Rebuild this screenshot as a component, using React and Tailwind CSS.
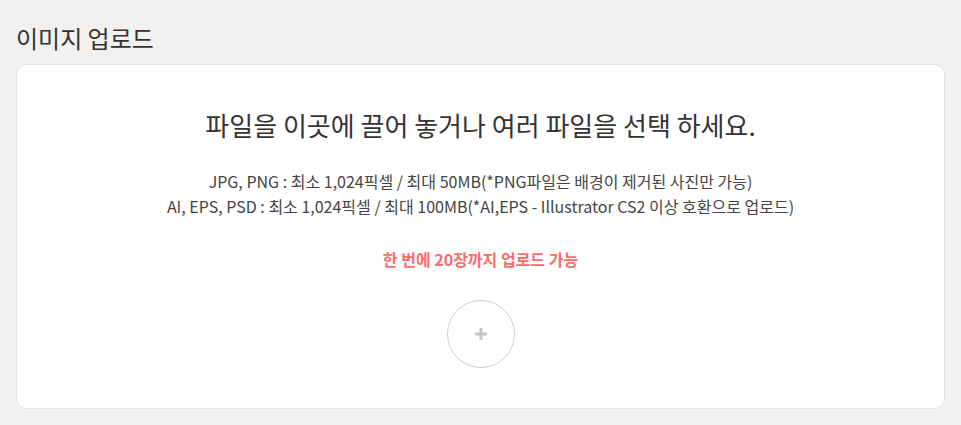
export default function App() {
  return (
    <div
      className="min-h-[425px] bg-[#f2f1ef] px-4 pt-[22px] text-[#333]"
      style={{ fontFamily: '"Noto Sans CJK KR", "Noto Sans", sans-serif' }}
    >
      <h2 className="text-[24px] leading-[32px] font-normal text-[#333]">이미지 업로드</h2>
      <div className="mt-[10px] w-[929px] h-[345px] rounded-[10px] border border-[#e3e2e0] bg-white flex flex-col items-center">
        <p className="mt-[43px] text-[26px] leading-[34px] text-[#333]">
          파일을 이곳에 끌어 놓거나 여러 파일을 선택 하세요.
        </p>
        <div className="mt-[27px] text-center text-[16px] leading-[25px] text-[#444]">
          <p>JPG, PNG : 최소 1,024픽셀 / 최대 50MB(*PNG파일은 배경이 제거된 사진만 가능)</p>
          <p>AI, EPS, PSD : 최소 1,024픽셀 / 최대 100MB(*AI,EPS - Illustrator CS2 이상 호환으로 업로드)</p>
        </div>
        <p className="mt-[29px] text-[16px] leading-[22px] font-bold text-[#ff6b6b]">
          한 번에 20장까지 업로드 가능
        </p>
        <button className="mt-[30px] w-[68px] h-[68px] rounded-full border border-[#cccccc] bg-white flex items-center justify-center">
          <svg width="14" height="14" viewBox="0 0 14 14">
            <path d="M7 1v12M1 7h12" stroke="#c4c4c4" strokeWidth="3" />
          </svg>
        </button>
      </div>
    </div>
  );
}
